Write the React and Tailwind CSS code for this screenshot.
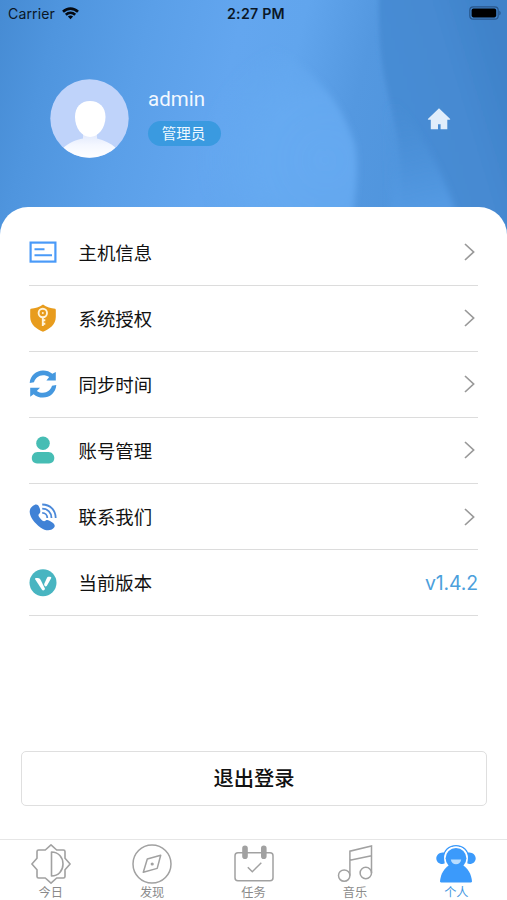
import React from 'react';

function HeaderBackdrop() {
  return (
    <svg className="absolute inset-0 h-full w-full" viewBox="0 0 507 240" preserveAspectRatio="none">
      <defs>
        <linearGradient id="base" x1="0" y1="0" x2="1" y2="0.12">
          <stop offset="0" stopColor="#468bd3" />
          <stop offset="0.12" stopColor="#4f95de" />
          <stop offset="0.3" stopColor="#5a9fe8" />
          <stop offset="0.48" stopColor="#63a6ef" />
          <stop offset="0.6" stopColor="#61a5ed" />
          <stop offset="0.74" stopColor="#5498e0" />
          <stop offset="0.87" stopColor="#5095dd" />
          <stop offset="1" stopColor="#488cd5" />
        </linearGradient>
        <linearGradient id="shade" gradientUnits="userSpaceOnUse" x1="375" y1="110" x2="507" y2="70">
          <stop offset="0" stopColor="#488dd5" />
          <stop offset="0.6" stopColor="#468ad2" />
          <stop offset="1" stopColor="#3f82c9" />
        </linearGradient>
        <linearGradient id="fold" gradientUnits="userSpaceOnUse" x1="395" y1="100" x2="420" y2="210">
          <stop offset="0" stopColor="#4b90d8" stopOpacity="0" />
          <stop offset="1" stopColor="#549ae3" />
        </linearGradient>
        <radialGradient id="glow" gradientUnits="userSpaceOnUse" cx="325" cy="160" r="125">
          <stop offset="0" stopColor="#67abf2" stopOpacity="0.9" />
          <stop offset="0.5" stopColor="#67abf2" stopOpacity="0.8" />
          <stop offset="1" stopColor="#67abf2" stopOpacity="0" />
        </radialGradient>
        <filter id="soft">
          <feGaussianBlur stdDeviation="2" />
        </filter>
        <filter id="softer">
          <feGaussianBlur stdDeviation="3" />
        </filter>
      </defs>
      <rect width="507" height="240" fill="url(#base)" />
      <path d="M190 -10 L270 45 C320 72 345 110 355 145 C359 170 357 195 345 260 H190Z" fill="url(#glow)" filter="url(#softer)" />
      <path d="M379 -5 C378 70 385 75 397 135 C402 165 402 205 405 250 H520 V-5Z" fill="url(#shade)" filter="url(#soft)" />
      <path d="M386 85 C410 120 438 155 457 215 V250 H392Z" fill="url(#fold)" filter="url(#softer)" />
    </svg>
  );
}

function StatusBar() {
  return (
    <div className="relative grid h-7 grid-cols-3 items-center pl-2 pr-[6px] text-[#0b1726]">
      <div className="flex items-center gap-[7px]">
        <span className="text-[14.1px] tracking-[0.1px]">Carrier</span>
        <svg className="h-[13px] w-[17px]" viewBox="0 0 17 13" fill="none" stroke="#050a12" strokeWidth="2.6">
          <path d="M1 4.8 C5.3 .6 11.7 .6 16 4.8" />
          <path d="M3.8 7.8 C6.6 5.2 10.4 5.2 13.2 7.8" />
          <path d="M5.9 9.6 C7.4 8.2 9.6 8.2 11.1 9.6 L8.5 12.3Z" fill="#050a12" stroke="none" />
        </svg>
      </div>
      <span className="ml-[3px] text-center text-[14.2px] font-semibold tracking-[0.25px]">2:27 PM</span>
      <svg className="-mt-[2px] h-[14px] w-8 justify-self-end" viewBox="0 0 32 14">
        <rect x="0.8" y="0.8" width="28.4" height="12.4" rx="3.5" fill="none" stroke="#28568a" strokeWidth="1.2" />
        <rect x="2.6" y="2.6" width="24.6" height="8.8" rx="1.8" fill="#000" />
        <path d="M30.3 4.7 C32.1 5.4 32.1 8.6 30.3 9.3Z" fill="#28568a" />
      </svg>
    </div>
  );
}

function Avatar() {
  return (
    <svg className="h-[79px] w-[79px] shrink-0" viewBox="0 0 79 79">
      <defs>
        <clipPath id="avatarClip">
          <circle cx="39.5" cy="39.5" r="39.2" />
        </clipPath>
        <linearGradient id="body" x1="0" y1="0" x2="0" y2="1">
          <stop offset="0" stopColor="#dde6fb" />
          <stop offset="0.5" stopColor="#f4f7ff" />
          <stop offset="1" stopColor="#fff" />
        </linearGradient>
      </defs>
      <g clipPath="url(#avatarClip)">
        <rect width="79" height="79" fill="#bfd3fa" />
        <path d="M13 69 C20 63 26 61 33 59.5 V53 H47 V59.5 C54 61 60 64 66 69 V79 H13Z" fill="url(#body)" />
        <path d="M40 22 C49 22 55.5 28 55.5 38 C55.5 49 48 58 40 58 C32 58 25 49 25 38 C25 28 31 22 40 22Z" fill="#fff" />
      </g>
    </svg>
  );
}

function HostIcon() {
  return (
    <svg className="h-7 w-7" viewBox="0 0 28 28" fill="none" stroke="#4a9af8">
      <rect x="1.6" y="4.6" width="24.8" height="19" strokeWidth="2.2" />
      <path d="M5.5 11.3 H15.5 M5.5 17.2 H23" strokeWidth="2" />
    </svg>
  );
}

function ShieldIcon() {
  return (
    <svg className="h-7 w-7" viewBox="0 0 28 28" fill="none">
      <path d="M14 .5 C17.5 3.2 22 4.5 26.2 4.7 C26.6 5 26.8 5.5 26.8 6 V13 C26.8 21 20 25.3 14 27.7 C8 25.3 1.2 21 1.2 13 V6 C1.2 5.4 1.4 5 1.8 4.7 C6 4.5 10.5 3.2 14 .5Z" fill="#e89c1d" />
      <circle cx="13.8" cy="9" r="4.2" stroke="#fff4dc" strokeWidth="1.9" />
      <path d="M13.8 13 V22 M13.8 16.2 H16.3 M13.8 19.8 H16.3" stroke="#fff4dc" strokeWidth="1.9" />
      <circle cx="13.8" cy="9" r="1" fill="#fff4dc" />
    </svg>
  );
}

function SyncIcon() {
  return (
    <svg className="h-7 w-7" viewBox="0 0 28 28" fill="#4598df">
      <path d="M.7 13 C1.2 5.3 7.2 .4 14 .4 C17.7 .4 20.9 1.6 23.4 3.8 L26.8 1.9 V10.5 H17.4 L20.2 7.1 C18.4 5.8 16.3 5.2 14 5.2 C9.7 5.2 6.2 8.2 5 12.2Z" />
      <path d="M27.3 15 C26.8 22.7 20.8 27.6 14 27.6 C10.3 27.6 7.1 26.4 4.6 24.2 L1.2 26.7 V17.8 H11 L7.8 20.9 C9.6 22.2 11.7 22.8 14 22.8 C18.3 22.8 21.8 19.8 23 15.8Z" />
    </svg>
  );
}

function AccountIcon() {
  return (
    <svg className="h-7 w-7" viewBox="0 0 28 28" fill="#46bdb4">
      <circle cx="14" cy="7.3" r="6.8" />
      <path d="M8.5 16 H19.5 C23 16 25.3 19 25.3 22 C25.3 25.3 23 27.4 20 27.4 H8 C5 27.4 2.8 25.3 2.8 22 C2.8 19 5 16 8.5 16Z" />
    </svg>
  );
}

function PhoneIcon() {
  return (
    <svg className="h-7 w-7" viewBox="0 0 28 28" fill="none">
      <path d="M5.5 2 C7.6 .9 9.6 2 10.6 4.9 C11.7 8 11.7 9.7 9.8 11.2 C8.9 12 9.6 13.5 11.8 16 C13.8 18.4 15.2 18.8 16.7 17.6 C18.5 16.4 20.3 17.6 23.3 19.6 C26 21.5 26.4 23.4 24.7 25 C21.5 28.2 16.6 28 11.4 24.4 C5.4 20 1 14.2 .7 9 C.5 5.3 3 3.1 5.5 2Z" fill="#4082d6" />
      <path d="M13.2 9.9 C16.2 9.9 18.3 12 18.3 15 M13.2 5.7 C18.8 5.7 22.5 9.6 22.5 15 M13.2 1.5 C21.3 1.5 26.7 7.3 26.7 15" stroke="#4b89d9" strokeWidth="1.8" />
    </svg>
  );
}

function VersionIcon() {
  return (
    <svg className="h-7 w-7" viewBox="0 0 28 28">
      <circle cx="14" cy="13.8" r="13.5" fill="#48b5c1" />
      <path d="M7.2 9 H8.8 C10.2 9 11 9.7 11.8 11.3 L16 19.8 C15.5 21.6 13.8 22 12.8 20.6 L6.3 10.6 C5.7 9.6 6.3 9 7.2 9Z" fill="#fff" />
      <path d="M19.5 7.7 H21 C22.4 7.7 22.5 8.6 22 9.6 L17.9 16.8 C17 18.2 16 17.6 15.4 16.4 C15 15.5 15.2 14.8 15.6 14 L17.9 9 C18.3 8.1 18.8 7.7 19.5 7.7Z" fill="#fff" />
    </svg>
  );
}

function TodayIcon() {
  return (
    <svg className="h-10 w-10 shrink-0" viewBox="0 0 40 40" fill="none" stroke="#a1a1a1" strokeWidth="1.6" strokeLinejoin="round">
      <path d="M20 .9 L25.7 6 H32.4 Q34 6 34 7.6 V14.3 L39.1 20 L34 25.7 V32.4 Q34 34 32.4 34 H25.7 L20 39.1 L14.3 34 H7.6 Q6 34 6 32.4 V25.7 L.9 20 L6 14.3 V7.6 Q6 6 7.6 6 H14.3Z" />
      <path d="M20.5 8 C27.5 8 32 13.5 32 20 C32 26.5 27.5 32 20.5 32Z" />
    </svg>
  );
}

function DiscoverIcon() {
  return (
    <svg className="h-10 w-10 shrink-0" viewBox="0 0 40 40" fill="none" stroke="#a1a1a1" strokeWidth="1.5">
      <circle cx="20" cy="20" r="19" />
      <path d="M28.7 11.2 L25.2 24.4 L11.3 28.3 L15.3 15Z" strokeLinejoin="round" />
      <circle cx="20.2" cy="20" r="1.6" fill="#a1a1a1" stroke="none" />
    </svg>
  );
}

function TaskIcon() {
  return (
    <svg className="h-10 w-10 shrink-0" viewBox="0 0 40 40" fill="none" stroke="#a1a1a1" strokeWidth="1.5">
      <rect x="1" y="8.8" width="38" height="28" rx="3" />
      <path d="M11 4.2 V12.2 M29.8 4.2 V12.2" strokeWidth="5.6" strokeLinecap="round" />
      <path d="M13.8 23.2 L18.3 27.7 L27.3 18.7" />
    </svg>
  );
}

function MusicIcon() {
  return (
    <svg className="h-10 w-10 shrink-0" viewBox="0 0 40 40" fill="none" stroke="#a1a1a1" strokeWidth="1.5">
      <circle cx="9.2" cy="31.6" r="5.7" />
      <circle cx="30.8" cy="29" r="5.7" />
      <path d="M14.9 31.6 V7.2 L36.5 2 V29 M14.9 16.2 L36.5 11.7" />
    </svg>
  );
}

function ProfileIcon() {
  return (
    <svg className="h-10 w-10 shrink-0" viewBox="0 0 40 40" fill="#3b9afb">
      <path d="M8.6 8.8 V19.6 C4 21 .3 18 .3 14.4 C.3 10.8 4 7.6 8.6 8.8Z M31.4 8.8 V19.6 C36 21 39.7 18 39.7 14.4 C39.7 10.8 36 7.6 31.4 8.8Z" />
      <path d="M7.6 14 C7.6 6.5 13 1.7 20 1.7 C27 1.7 32.4 6.5 32.4 14" fill="none" stroke="#3b9afb" strokeWidth="1.5" />
      <path d="M10.6 20 C9.3 18.2 8.7 16.2 8.7 14 C8.7 7.5 13.5 3.2 20 3.2 C26.5 3.2 31.3 7.5 31.3 14 C31.3 16.2 30.7 18.2 29.4 20" fill="#fff" stroke="#fff" strokeWidth="1.2" />
      <path d="M4 37.6 C4.6 29.5 8.5 24 13.5 21 H26.5 C31.5 24 35.4 29.5 36 37.6 Q36 38.4 35 38.4 H5 Q4 38.4 4 37.6Z" />
      <circle cx="20" cy="14.3" r="10.4" />
      <path d="M14.8 15.5 H25.2 C24.8 18.6 22.8 20.2 20 20.2 C17.2 20.2 15.2 18.6 14.8 15.5Z" fill="#b9ddff" />
    </svg>
  );
}

const menuItems = [
  { label: '主机信息', icon: HostIcon },
  { label: '系统授权', icon: ShieldIcon },
  { label: '同步时间', icon: SyncIcon },
  { label: '账号管理', icon: AccountIcon },
  { label: '联系我们', icon: PhoneIcon },
  { label: '当前版本', icon: VersionIcon, value: 'v1.4.2' },
];

const tabs = [
  { label: '今日', icon: TodayIcon },
  { label: '发现', icon: DiscoverIcon },
  { label: '任务', icon: TaskIcon },
  { label: '音乐', icon: MusicIcon },
  { label: '个人', icon: ProfileIcon, active: true },
];

function MenuRow({ item }) {
  const Icon = item.icon;
  return (
    <li className="flex h-[66.1px] items-center border-b border-[#dcdcdc]">
      <Icon />
      <span className="ml-[21.5px] flex-1 pt-[3px] text-[18.4px] text-[#111]">{item.label}</span>
      {item.value ? (
        <span className="pt-px text-[19.4px] tracking-[-0.1px] text-[#4c9fdc]">{item.value}</span>
      ) : (
        <svg className="mr-[3px] h-[18px] w-[11px]" viewBox="0 0 11 18" fill="none" stroke="#999" strokeWidth="1.7">
          <path d="M1 1 L9.6 9 L1 17" />
        </svg>
      )}
    </li>
  );
}

export default function App() {
  return (
    <div className="flex h-[900px] w-[507px] flex-col overflow-hidden bg-white font-['Inter','Noto_Sans_CJK_SC',sans-serif]">
      <header className="relative h-[240px] shrink-0">
        <HeaderBackdrop />
        <StatusBar />
        <div className="relative mt-[51px] flex items-center pl-[50px] pr-[56px]">
          <Avatar />
          <div className="mb-[4px] ml-[19px] flex flex-1 flex-col items-start">
            <span className="font-['Roboto',sans-serif] text-[20.5px] leading-6 text-[#f2f8ff]">admin</span>
            <span className="mt-[10px] flex h-[25px] w-[73px] items-center justify-center rounded-full bg-[#3a9ae0] pr-0.5 text-[14.5px] text-[#eef8ff]">
              管理员
            </span>
          </div>
          <svg className="h-[22px] w-6" viewBox="0 0 24 22" fill="#e0edfb">
            <path d="M12 .3 L23.2 11 Q23.5 11.8 22.4 11.8 H20.3 V21.3 H13.6 V16.3 H11 V21.3 H3.8 V11.8 H1.6 Q.5 11.8 .9 11Z" />
          </svg>
        </div>
      </header>

      <main className="relative -mt-[33px] flex-1 rounded-t-[28px] bg-white px-[29px] pt-[12.6px]">
        <ul>
          {menuItems.map((item) => (
            <MenuRow key={item.label} item={item} />
          ))}
        </ul>
        <button className="-mx-2 mt-[134.8px] block h-[55px] w-[466px] rounded-[5px] border border-[#dfdfdf] pt-[2px] text-[20.3px] font-medium text-[#111]">
          退出登录
        </button>
      </main>

      <nav className="flex h-[61px] shrink-0 border-t border-[#e6e6e6] bg-white">
        {tabs.map(({ label, icon: Icon, active }) => (
          <div
            key={label}
            className={`flex flex-1 flex-col items-center pt-[3.5px] text-[12.2px] leading-4 ${
              active ? 'text-[#4597df]' : 'text-[#8a8a8a]'
            }`}
          >
            <Icon />
            <span className="pt-px">{label}</span>
          </div>
        ))}
      </nav>
    </div>
  );
}
